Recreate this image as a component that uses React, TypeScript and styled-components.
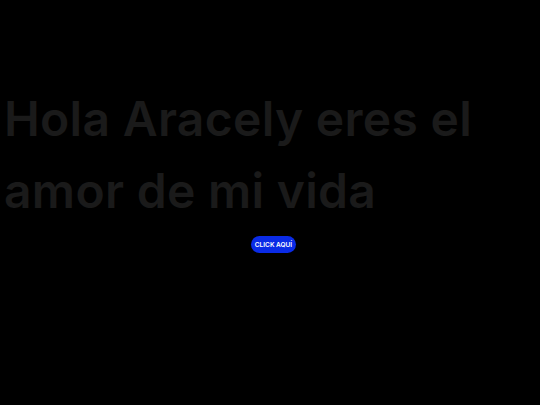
import React from "react";
import styled, { createGlobalStyle } from "styled-components";

const Global = createGlobalStyle`
  html, body { margin: 0; padding: 0; background: #000; }
  body { font-family: "Inter", "Liberation Sans", sans-serif; }
`;

const Page = styled.main`
  min-height: 405px;
  display: flex;
  flex-direction: column;
  padding: 83px 4px 0;
  box-sizing: border-box;
`;

const Title = styled.h1`
  margin: 0;
  font-family: "Inter", "Liberation Sans", sans-serif;
  font-weight: 600;
  font-size: 48px;
  line-height: 72px;
  letter-spacing: 0.3px;
  color: #1a1a1a;
`;

const Actions = styled.div`
  display: flex;
  justify-content: center;
  padding-left: 7px;
  margin-top: 9px;
`;

const Button = styled.button`
  border: none;
  background: #0a2be6;
  color: #fff;
  font-family: "Inter", "Liberation Sans", sans-serif;
  font-weight: 600;
  font-size: 6.5px;
  height: 17px;
  padding: 0 4px;
  border-radius: 9px;
  cursor: pointer;
`;

export default function App() {
  return (
    <>
      <Global />
      <Page>
        <Title>
          Hola Aracely eres el
          <br />
          amor de mi vida
        </Title>
        <Actions>
          <Button>CLICK AQUÍ</Button>
        </Actions>
      </Page>
    </>
  );
}
